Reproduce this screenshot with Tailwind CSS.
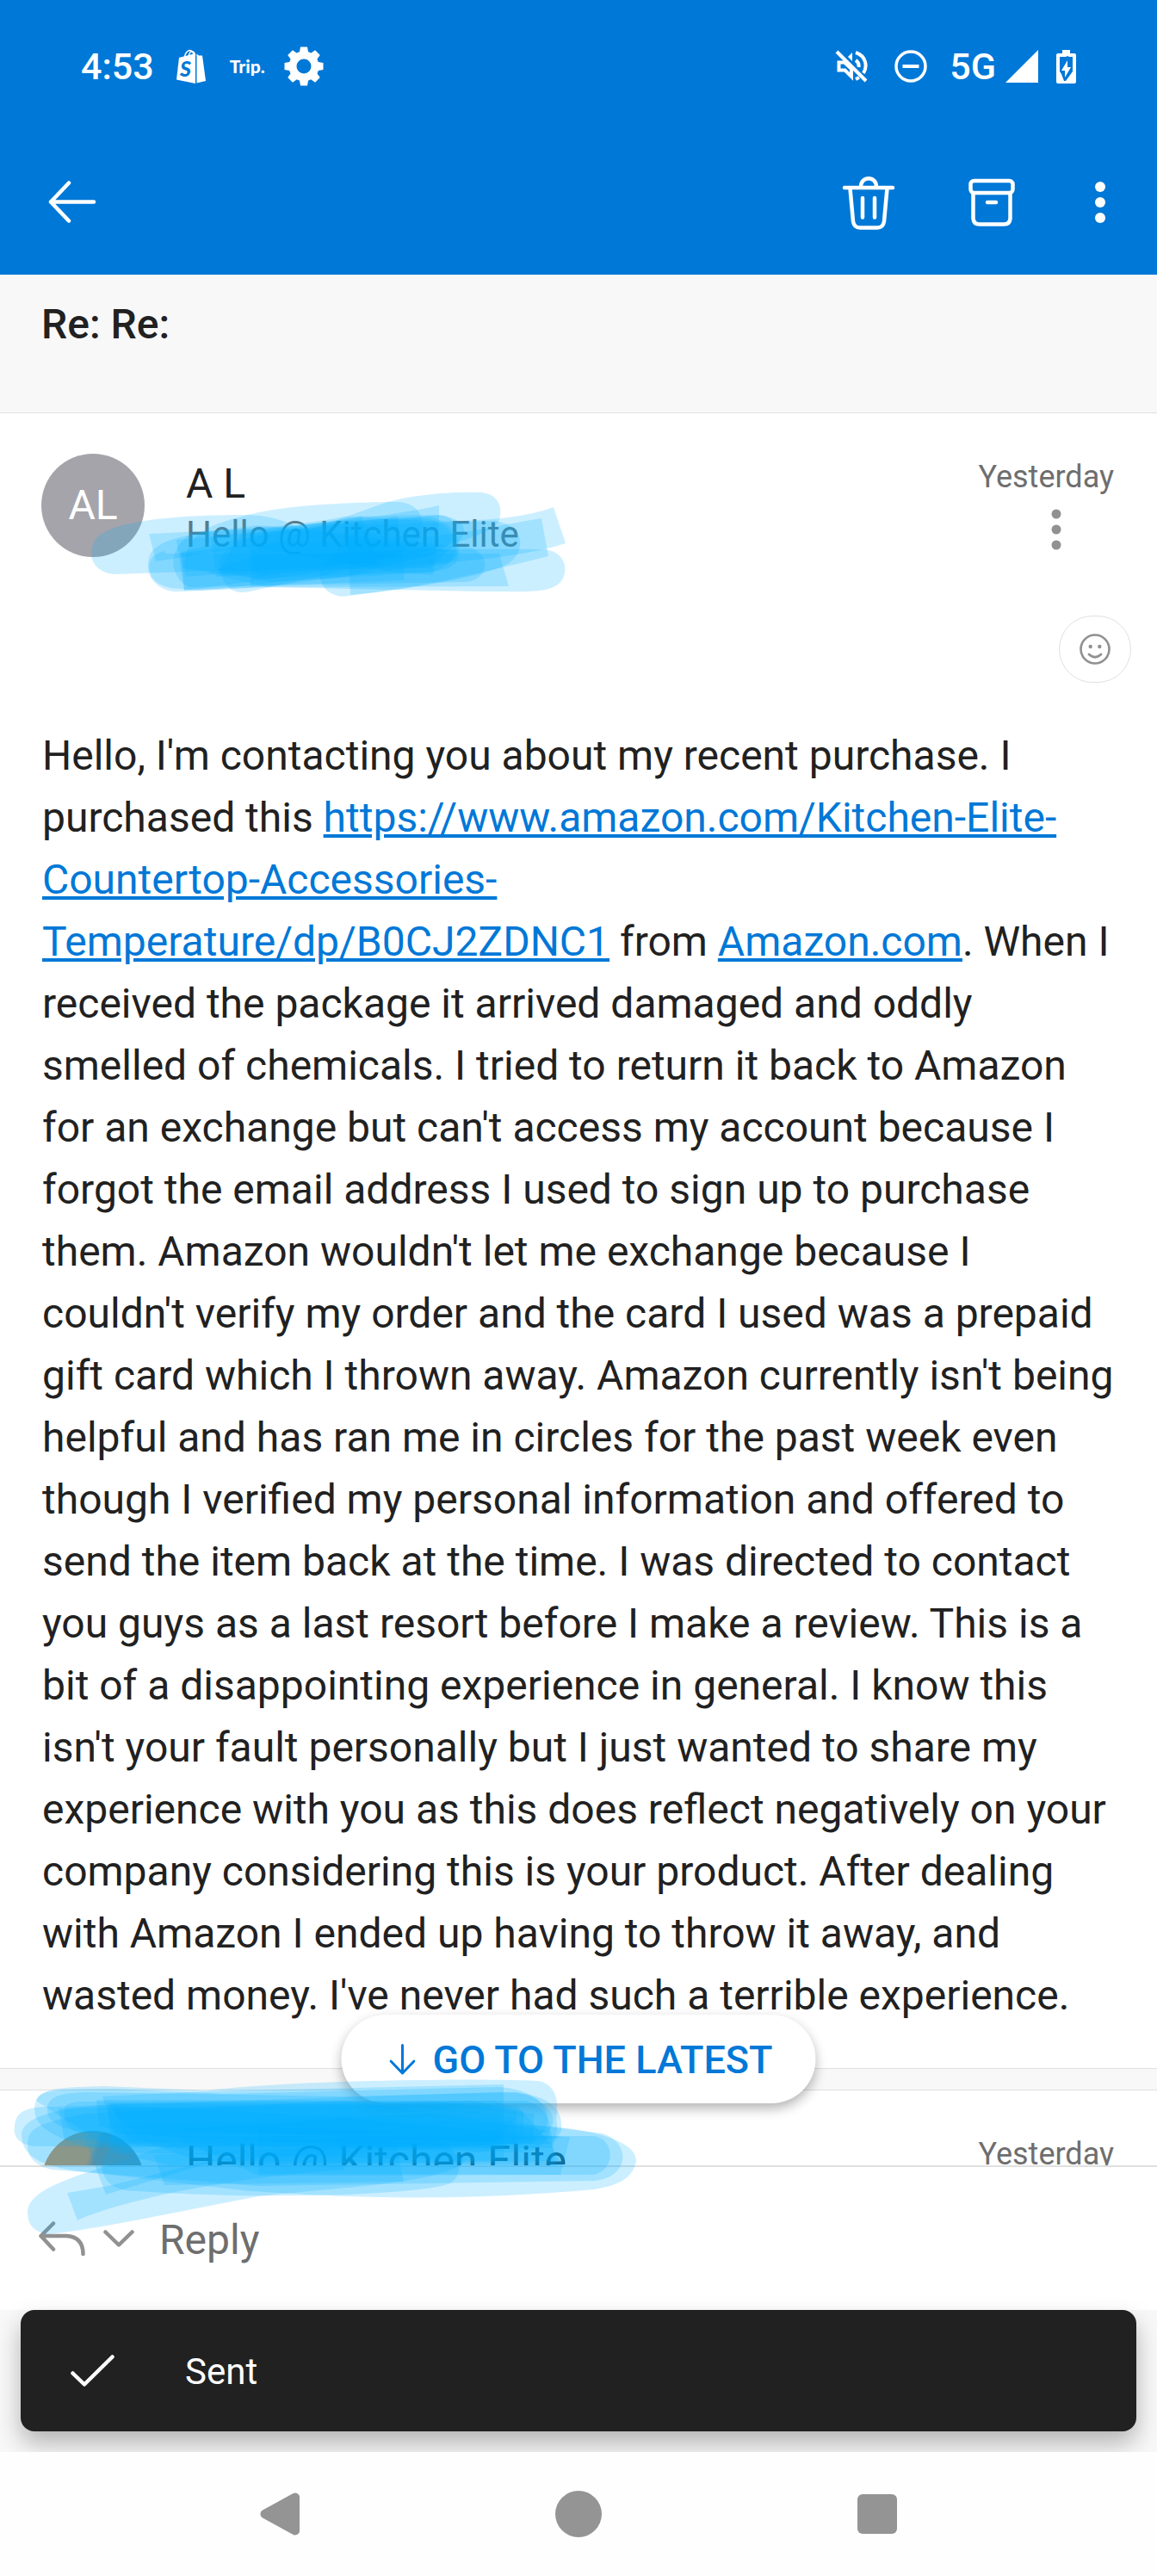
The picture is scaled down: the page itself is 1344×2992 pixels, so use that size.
<!DOCTYPE html>
<html lang="en">
<head>
<meta charset="utf-8">
<meta name="viewport" content="width=device-width, initial-scale=1">
<title>Re: Re:</title>
<script src="https://cdn.jsdelivr.net/npm/@tailwindcss/browser@4"></script>
</head>
<body class="flex h-screen flex-col overflow-hidden bg-white font-['Roboto',sans-serif] text-[#212121]">

<header class="shrink-0 bg-[#0078d7] text-white">
  <!-- Status bar -->
  <div class="flex h-[154px] items-center justify-between pr-[94px] pl-[94px]">
    <div class="flex items-center">
      <time class="text-[43px] leading-[48px] font-medium">4:53</time>
      <svg class="ml-[26px] h-10 w-[34px]" viewBox="0 0 34 40" fill="none" aria-label="Shopify" role="img">
        <path d="M9 13C9 6 12 2 15 1.500C18 1.500 20 4 20.500 9M14 12C14 6 16 3 18 2.500C21 3 21.500 6 21.500 8" stroke="#fff" stroke-width="1.500"/>
        <path d="M3 10L22 5V40L0 35.500Z" fill="#fff"/>
        <path d="M23.500 5.500L26 7.500H30L34 37L23.500 39.500Z" fill="#fff"/>
        <text x="4" y="32" font-family="Lato, sans-serif" font-size="25" font-weight="900" font-style="italic" fill="#0078d7">S</text>
      </svg>
      <span class="ml-7 font-['Lato',sans-serif] text-[21px] leading-6 font-black">Trip.</span>
      <svg class="ml-[22px] size-[46px]" viewBox="-23 -23 46 46" fill="#fff" aria-label="Settings" role="img">
        <path d="M-4 -22.500H4L5.500 -14H-5.500ZM-4 22.500H4L5.500 14H-5.500ZM-22.500 -4V4L-14 5.500V-5.500ZM22.500 -4V4L14 5.500V-5.500Z"/>
        <path transform="rotate(45)" d="M-4 -22.500H4L5.500 -14H-5.500ZM-4 22.500H4L5.500 14H-5.500ZM-22.500 -4V4L-14 5.500V-5.500ZM22.500 -4V4L14 5.500V-5.500Z"/>
        <circle r="13" fill="none" stroke="#fff" stroke-width="9"/>
      </svg>
    </div>
    <div class="flex items-center">
      <svg class="h-[38px] w-[38px]" viewBox="0 0 38 38" fill="none" aria-label="Muted" role="img">
        <path d="M4.500 14.500H11L19 22V31L11.500 23.500H4.500Z" stroke="#fff" stroke-width="4"/>
        <path d="M15 8L20 3V13Z" fill="#fff"/>
        <path d="M24 3C36 7 38 19 33 27M24 34L28 32M24 12C27 14 28 17 27.500 20" stroke="#fff" stroke-width="4"/>
        <path d="M2 2L36 36" stroke="#fff" stroke-width="4"/>
      </svg>
      <svg class="ml-[31px] size-[38px]" viewBox="0 0 38 38" fill="none" stroke="#fff" aria-label="Do not disturb" role="img">
        <circle cx="19" cy="19" r="17" stroke-width="3.500"/><path d="M9.500 19H28.500" stroke-width="4"/>
      </svg>
      <span class="ml-[26px] text-[43px] leading-[48px] font-medium">5G</span>
      <svg class="ml-[11px] size-[38px]" viewBox="0 0 38 38" fill="#fff" aria-label="Signal" role="img"><path d="M38 0V38H0Z"/></svg>
      <svg class="ml-[21px] h-[39px] w-[23px]" viewBox="0 0 23 39" fill="#fff" aria-label="Charging" role="img">
        <path fill-rule="evenodd" d="M7 0H16V4H21Q23 4 23 6V37Q23 39 21 39H2Q0 39 0 37V6Q0 4 2 4H7ZM4 8V25L6 28L9 36H11L19 25V8H15L13 7L11 8Z"/>
        <path d="M13 12V20H17L10 32V24H6Z"/>
      </svg>
    </div>
  </div>
  <!-- Message toolbar -->
  <nav class="flex h-[165px] items-center justify-between pr-14 pb-1 pl-12" aria-label="Message actions">
    <button class="flex size-18 items-center" aria-label="Back">
      <svg class="h-[50px] w-[72px]" viewBox="0 0 72 50" fill="none" stroke="#fff" stroke-width="4.500" stroke-linecap="round" stroke-linejoin="round"><path d="M32 2.500L11 24.500L32 46.500M11 24.500H61"/></svg>
    </button>
    <div class="flex items-center">
      <button aria-label="Delete"><svg class="size-16" viewBox="0 0 64 64" fill="none" stroke="#fff" stroke-width="4.500" stroke-linecap="round" stroke-linejoin="round"><path d="M4 15H60M23 14C23 1 41 1 41 14M10.500 16L14 54Q15 61.500 22 61.500H42Q49 61.500 50 54L53.500 16M25 27V49.500M39 27V49.500"/></svg></button>
      <button class="ml-[84px]" aria-label="Archive"><svg class="h-14 w-[54px]" viewBox="0 0 54 56" fill="none" stroke="#fff" stroke-width="4.500" stroke-linecap="round" stroke-linejoin="round"><rect x="2.500" y="3" width="49" height="14" rx="4"/><path d="M5.500 18V46Q5.500 53.500 13 53.500H41Q48.500 53.500 48.500 46V18M22 28H32"/></svg></button>
      <button class="ml-[89px]" aria-label="More options"><svg class="h-12 w-5" viewBox="0 0 20 48" fill="#fff"><circle cx="10" cy="6" r="6"/><circle cx="10" cy="24" r="6"/><circle cx="10" cy="42" r="6"/></svg></button>
    </div>
  </nav>
</header>

<main class="min-h-0 flex-1 overflow-hidden">
  <div class="h-[161px] border-b border-[#e0e0e0] bg-[#f8f8f8] px-12 pt-[30px]">
    <h1 class="text-[48px] leading-[56px] font-medium">Re: Re:</h1>
  </div>

  <article class="relative border-b border-[#e0e0e0] pb-12">
    <div class="flex pt-[47px] pr-[50px] pl-12">
      <div class="flex size-[120px] shrink-0 items-center justify-center rounded-full bg-[#a5a4aa] text-[48px] leading-[60px] text-white">AL</div>
      <div class="ml-12 flex-1 pt-[5px]">
        <h2 class="text-[48px] leading-[60px]">A L</h2>
        <p class="text-[42px] leading-[58px] text-[#6e6e6e]">Hello @ Kitchen Elite</p>
      </div>
      <div class="flex flex-col items-end pt-[5px]">
        <time class="text-[36px] leading-[44px] text-[#6e6e6e]">Yesterday</time>
        <button class="flex h-[78px] w-[134px] items-center justify-center" aria-label="Message options"><svg class="h-12 w-3" viewBox="0 0 12 48" fill="#919191"><circle cx="6" cy="6" r="5.500"/><circle cx="6" cy="24" r="5.500"/><circle cx="6" cy="42" r="5.500"/></svg></button>
      </div>
    </div>
    <div class="mt-[61px] flex justify-end px-[30px]">
      <button class="flex h-[78px] w-21 items-center justify-center rounded-full border border-[#e0e0e0]" aria-label="React">
        <svg class="size-9" viewBox="0 0 36 36" fill="none" stroke="#919191" stroke-width="2.700" stroke-linecap="round"><circle cx="18" cy="18" r="16.500"/><path d="M11 24Q18 30.500 25 24"/><circle cx="12.700" cy="15" r="2.200" fill="#919191" stroke="none"/><circle cx="23.300" cy="15" r="2.200" fill="#919191" stroke="none"/></svg>
      </button>
    </div>
    <p class="mt-[49px] pr-12 pl-[49px] text-[48px] leading-[72px]">Hello, I'm contacting you about my recent purchase. I purchased this <a class="text-[#0078d7] underline" href="#">https://www.amazon.com/Kitchen-Elite-Countertop-Accessories-<br>Temperature/dp/B0CJ2ZDNC1</a> from <a class="text-[#0078d7] underline" href="#">Amazon.com</a>. When I received the package it arrived damaged and oddly smelled of chemicals. I tried to return it back to Amazon for an exchange but can't access my account because I forgot the email address I used to sign up to purchase them. Amazon wouldn't let me exchange because I couldn't verify my order and the card I used was a prepaid gift card which I thrown away. Amazon currently isn't being helpful and has ran me in circles for the past week even though I verified my personal information and offered to send the item back at the time. I was directed to contact you guys as a last resort before I make a review. This is a bit of a disappointing experience in general. I know this isn't your fault personally but I just wanted to share my experience with you as this does reflect negatively on your company considering this is your product. After dealing with Amazon I ended up having to throw it away, and wasted money. I've never had such a terrible experience.</p>

    <!-- Marker strokes over the sender -->
    <svg class="pointer-events-none absolute top-[80px] left-[100px] h-[150px] w-[580px]" viewBox="100 560 580 150" fill="#00adff" fill-opacity=".2" aria-hidden="true">
      <path d="M133 667C105 665 100 640 112 625C135 600 240 598 290 598Q320 599 345 612L520 640L500 660L245 663Z"/>
      <path d="M292 597C340 585 430 583 462 583C485 584 495 600 489 622C480 650 400 655 340 660L215 670C210 620 240 610 292 597Z"/>
      <path d="M450 583C490 572 540 571 560 572C580 574 586 592 578 608C560 625 500 640 450 650L300 670L290 640Z"/>
      <path d="M173 620L300 614C380 608 450 600 510 587V610L503 668L460 665L290 635L181 652Z"/>
      <path d="M420 600C520 610 600 605 643 589L657 631C600 650 500 655 420 660L250 670L280 620Z"/>
      <path d="M400 610C480 640 560 612 629 602L637 646C560 665 480 685 407 691L403 620Z"/>
      <path d="M300 645C500 636 600 638 632 638C655 640 662 660 652 675C640 690 610 687 560 687L310 682L240 665Z"/>
      <path d="M192 643L580 643L591 681L310 682C220 684 190 690 176 670C168 650 180 642 192 640Z"/>
      <path d="M174 645C165 670 185 687 205 687C250 687 300 676 400 670L520 640C560 612 530 598 500 598L400 600C300 620 190 610 174 645Z"/>
      <path d="M372 660C368 690 395 695 405 692C450 686 550 675 590 655C612 640 610 610 575 605L420 610Z"/>
      <path d="M205 627L214 686L480 650C540 640 540 600 510 598L400 610Z"/>
      <path d="M255 650C255 680 270 692 290 687L440 655L420 600C330 615 270 620 255 650Z"/>
      <path d="M222 620C190 640 200 675 220 682L540 676C570 674 572 640 540 635L300 610Z"/>
      <path d="M210 641C300 620 430 600 500 600C540 612 540 645 520 655C400 668 280 690 214 685Z"/>
      <path d="M291 620V681L470 674L462 600Z"/>
      <path d="M245 625C300 612 430 600 500 603C545 620 535 655 500 665L312 676L250 661Z"/>
      <path d="M210 642C300 630 400 622 533 640Q535 662 500 664L300 672L212 660Z"/>
    </svg>
  </article>

  <div class="h-6 bg-[#f8f8f8]"></div>

  <article class="border-t border-[#e0e0e0]">
    <div class="flex pt-[47px] pr-[50px] pl-12">
      <div class="size-[120px] shrink-0 rounded-full bg-linear-110 from-[#d98b48] from-40% to-[#8f7f70] to-45%"></div>
      <div class="ml-12 flex-1 pt-[5px]">
        <h2 class="text-[48px] leading-[60px]">Hello @ Kitchen Elite</h2>
      </div>
      <time class="pt-[5px] text-[36px] leading-[44px] text-[#6e6e6e]">Yesterday</time>
    </div>
  </article>
</main>

<footer class="relative shrink-0">
  <div class="flex h-[168px] items-center border-t-2 border-[#e0e0e0] bg-white px-[45px] text-[#919191]">
    <button class="flex items-center" aria-label="Reply options">
      <svg class="h-10 w-[54px]" viewBox="0 0 54 40" fill="none" stroke="currentColor" stroke-width="4.500" stroke-linecap="round" stroke-linejoin="round"><path d="M17 2.500L2.500 17L17 32.500M2.500 17H32Q51.500 18 51.500 38"/></svg>
      <svg class="ml-[21px] h-5 w-9" viewBox="0 0 36 20" fill="none" stroke="currentColor" stroke-width="4.500" stroke-linecap="round" stroke-linejoin="round"><path d="M2.500 2.500L18 17.500L33.500 2.500"/></svg>
    </button>
    <button class="ml-[29px] pt-[3px] text-[48px] leading-[60px] text-[#6e6e6e]">Reply</button>
  </div>

  <div class="bg-[#f8f8f8] px-6 pb-6">
    <div class="flex h-[141px] items-center rounded-2xl bg-[#212121] pl-[58px] text-white shadow-[0_14px_28px_rgba(0,0,0,0.28)]" role="status">
      <svg class="h-[38px] w-[51px]" viewBox="0 0 51 38" fill="none" stroke="#fff" stroke-width="4.500" stroke-linecap="round" stroke-linejoin="round"><path d="M2.500 21.500L16 34.500L48.500 2.500"/></svg>
      <span class="ml-[82px] pt-[3px] text-[42px] leading-[56px]">Sent</span>
    </div>
  </div>

  <nav class="relative grid h-36 grid-cols-[1fr_auto_1fr] items-center bg-[#fefefe] px-[302px]" aria-label="System navigation">
    <button class="w-12 justify-self-start" aria-label="Back"><svg class="h-[50px] w-12" viewBox="0 0 48 50" fill="#949494" stroke="#949494" stroke-width="10" stroke-linejoin="round"><path d="M5.500 25L41 5.500V44.500Z"/></svg></button>
    <button class="size-[54px] rounded-full bg-[#949494]" aria-label="Home"></button>
    <button class="size-[46px] justify-self-end rounded-md bg-[#949494]" aria-label="Recent apps"></button>
  </nav>

  <button class="absolute bottom-full left-1/2 mb-[72px] flex h-[103px] -translate-x-1/2 items-center rounded-full bg-white pr-[50px] pl-[56px] text-[45px] leading-[56px] font-medium whitespace-nowrap text-[#0078d7] shadow-[0_6px_14px_rgba(0,0,0,0.3)]">
    <svg class="h-9 w-[30px]" viewBox="0 0 30 36" fill="none" stroke="currentColor" stroke-width="3" stroke-linecap="round" stroke-linejoin="round"><path d="M15 1.500V34M1.500 20L15 34L28.500 20"/></svg>
    <span class="ml-5 pt-0.5">GO TO THE LATEST</span>
  </button>

  <!-- Marker strokes over the next message -->
  <svg class="pointer-events-none absolute -top-[110px] left-0 h-[200px] w-[760px]" viewBox="0 2405 760 200" fill="#00adff" fill-opacity=".2" aria-hidden="true">
    <path d="M40 2450C42 2425 60 2425 120 2423L240 2428C350 2415 560 2414 625 2417C645 2420 650 2440 646 2460Q650 2480 640 2490L100 2495C60 2480 40 2470 40 2450Z"/>
    <path d="M17 2470C18 2450 35 2447 60 2447L580 2430C640 2430 655 2450 652 2475L640 2495L200 2493H40C20 2490 15 2480 17 2470Z"/>
    <path d="M25 2480C25 2460 60 2450 120 2445L640 2470C700 2475 740 2490 739 2510C735 2530 720 2538 690 2543C500 2560 380 2550 290 2545L120 2525C60 2520 25 2510 25 2480Z"/>
    <path d="M32 2490C30 2515 60 2520 60 2520L300 2539L690 2533C730 2530 735 2490 700 2478L400 2440L100 2455C50 2465 32 2470 32 2490Z"/>
    <path d="M68 2449L575 2440L608 2453V2485L560 2500L75 2485Z"/>
    <path d="M112 2439L550 2440L600 2452V2490L115 2470Z"/>
    <path d="M119 2435L240 2429L585 2421V2510L140 2500Z"/>
    <path d="M32 2570C32 2550 60 2538 90 2527L200 2490L500 2480L540 2510C520 2535 400 2540 300 2551C200 2570 110 2590 55 2595C40 2592 32 2585 32 2570Z"/>
    <path d="M78 2547L130 2538L250 2508L400 2490V2520C250 2530 130 2560 90 2579Z"/>
    <path d="M97 2480L123 2549L250 2510L600 2490L655 2482L400 2460Z"/>
    <path d="M118 2515C120 2540 140 2545 160 2545C300 2555 480 2550 520 2537C540 2530 535 2500 520 2490L130 2480Z"/>
    <path d="M179 2503L191 2538L469 2534L460 2490Z"/>
    <path d="M125 2443L600 2445L640 2490L650 2510L200 2515L130 2500Z"/>
    <path d="M75 2450C72 2480 100 2478 110 2478L600 2500C650 2500 650 2450 610 2440L110 2441C80 2440 75 2445 75 2450Z"/>
    <path d="M55 2450C55 2435 70 2431 100 2430L400 2435L600 2430C650 2440 655 2480 620 2480L100 2478C60 2470 55 2460 55 2450Z"/>
    <path d="M300 2470L662 2482L651 2526L300 2525Z"/>
    <path d="M200 2481H690C715 2485 715 2520 690 2526L300 2527Z"/>
    <path d="M42 2440C45 2425 80 2427 130 2426L260 2432L580 2424C640 2428 650 2470 620 2485L120 2490Z"/>
    <path d="M128 2443L510 2441L620 2455V2490L250 2500L150 2490Z"/>
    <path d="M130 2450L500 2445L600 2460L570 2495L160 2480Z"/>
    <path d="M120 2470L500 2455L640 2475L645 2515L230 2510Z"/>
  </svg>
</footer>
</body>
</html>
